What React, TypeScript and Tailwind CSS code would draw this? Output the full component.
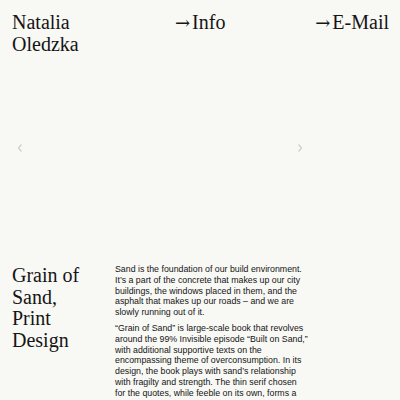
import React from 'react';

const serif = "font-['Liberation_Serif',serif]";

const intro = [
  'Sand is the foundation of our build environment.',
  'It’s a part of the concrete that makes up our city',
  'buildings, the windows placed in them, and the',
  'asphalt that makes up our roads – and we are',
  'slowly running out of it.',
];

const about = [
  '“Grain of Sand” is large-scale book that revolves',
  'around the 99% Invisible episode “Built on Sand,”',
  'with additional supportive texts on the',
  'encompassing theme of overconsumption. In its',
  'design, the book plays with sand’s relationship',
  'with fragilty and strength. The thin serif chosen',
  'for the quotes, while feeble on its own, forms a',
];

function Lines({ lines }: { lines: string[] }) {
  return (
    <>
      {lines.map((l, i) => (
        <span key={i} className="block whitespace-nowrap">
          {l}
        </span>
      ))}
    </>
  );
}

function NavLink({ label }: { label: string }) {
  return (
    <a className="flex items-baseline whitespace-nowrap">
      <span className="font-['DejaVu_Serif',serif] text-[18px] mr-[2px]">→</span>
      {label}
    </a>
  );
}

export default function App() {
  return (
    <div className="w-[400px] h-[400px] overflow-hidden bg-[#f8f8f4] text-[#151515]">
      <header className={`flex items-start pt-[11px] pl-[12px] pr-[11px] text-[20px] leading-[22px] ${serif}`}>
        <div className="w-[163px]">
          Natalia
          <br />
          Oledzka
        </div>
        <div className="w-[138px]">
          <NavLink label="Info" />
        </div>
        <div className="ml-auto">
          <NavLink label="E-Mail" />
        </div>
      </header>

      <section className="h-[186px] w-[320px] flex items-center justify-between px-[16px] text-[#cfcfcc]">
        <svg width="8" height="10" viewBox="0 0 8 10" fill="none" stroke="currentColor" strokeWidth="1.3">
          <path d="M5.5 1.5 2.5 5l3 3.5" />
        </svg>
        <svg width="8" height="10" viewBox="0 0 8 10" fill="none" stroke="currentColor" strokeWidth="1.3">
          <path d="M2.5 1.5 5.5 5l-3 3.5" />
        </svg>
      </section>

      <section className="flex pl-[12px] pt-[22px]">
        <h1 className={`w-[103px] mt-[2px] text-[20px] leading-[21.5px] ${serif}`}>
          Grain of
          <br />
          Sand,
          <br />
          Print
          <br />
          Design
        </h1>
        <div className="text-[8.8px] leading-[10.8px] font-['Liberation_Sans',sans-serif] pt-[1px]">
          <p>
            <Lines lines={intro} />
          </p>
          <p className="mt-[5px]">
            <Lines lines={about} />
          </p>
        </div>
      </section>
    </div>
  );
}
